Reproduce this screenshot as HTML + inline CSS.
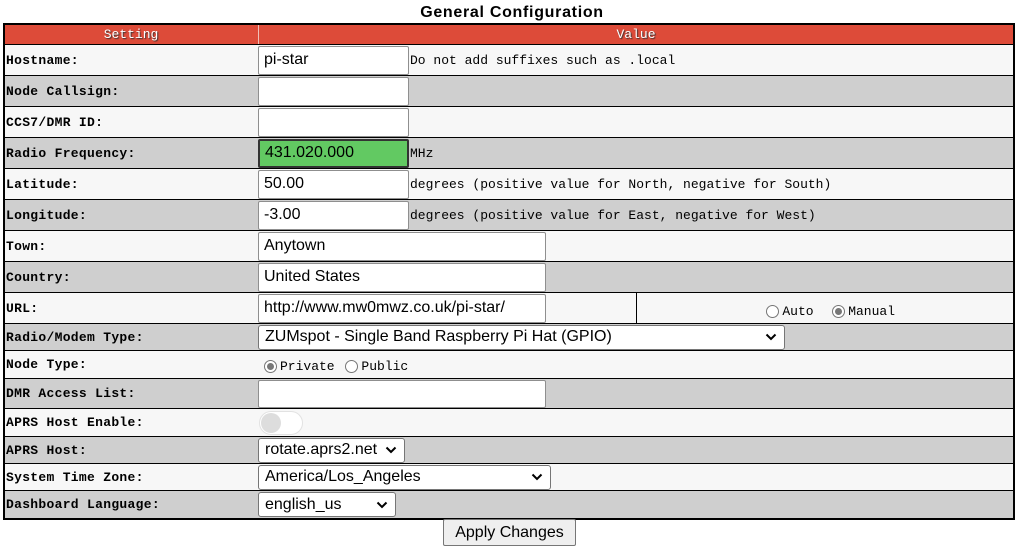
<!DOCTYPE html><html><head><style>
body{margin:0;width:1024px;height:553px;background:#fff;position:relative;font-family:"Liberation Mono",monospace;overflow:hidden}
.t{position:absolute;left:0;top:4px;width:1024px;text-align:center;font:bold 16px "Liberation Sans",sans-serif;letter-spacing:0.7px;color:#000}
.tb{position:absolute;left:3px;top:23px;width:1008px;height:493px;border:2px solid #000;background:#000}
.r{position:absolute;left:0;width:1008px}
.l{position:absolute;left:0;width:252px;top:0;bottom:0;font-weight:bold;font-size:13px;padding-left:1px;display:flex;align-items:center;letter-spacing:0.3px}
.v{position:absolute;left:254px;right:0;top:0;bottom:0;font-size:13px;display:flex;align-items:center}
.a{background:#f7f7f7}.b{background:#cfcfcf}
.in{box-sizing:border-box;height:29px;border:1px solid #8f8f8f;border-radius:2px;background:#fff;font:16px "Liberation Sans",sans-serif;padding-left:5px;display:flex;align-items:center;margin-left:-1px;margin-right:1px}
.sel{box-sizing:border-box;height:25px;border:1px solid #767676;border-radius:3px;background:#fff;font:16px "Liberation Sans",sans-serif;padding-left:6px;display:flex;align-items:center;justify-content:space-between;padding-right:7px;margin-left:-1px}
.rad{display:inline-block;width:13px;height:13px;border:1px solid #767676;border-radius:50%;box-sizing:border-box;vertical-align:-2px;margin:0 3px 0 3px;position:relative;background:#fff}
.rad.on::after{content:"";position:absolute;left:2px;top:2px;width:7px;height:7px;border-radius:50%;background:#777}
</style></head><body>
<div class="t">General Configuration</div>
<div class="tb">
<div class="r" style="top:0;height:19px;background:#dd4b39;color:#fff;font-size:13px;text-shadow:1px 1px 1px #333">
<div style="position:absolute;left:0;width:252px;text-align:center;top:2px">Setting</div>
<div style="position:absolute;left:253px;width:1px;top:0;bottom:0;background:#f0c0b8"></div>
<div style="position:absolute;left:254px;right:0;text-align:center;top:2px">Value</div></div>

<div class="r a" style="top:20px;height:30px"><div class="l">Hostname:</div><div class="v a"><div class="in" style="width:151px">pi-star</div>Do not add suffixes such as .local</div></div>
<div class="r b" style="top:51px;height:30px"><div class="l">Node Callsign:</div><div class="v b"><div class="in" style="width:151px"></div></div></div>
<div class="r a" style="top:82px;height:30px"><div class="l">CCS7/DMR ID:</div><div class="v a"><div class="in" style="width:151px"></div></div></div>
<div class="r b" style="top:113px;height:30px"><div class="l">Radio Frequency:</div><div class="v b"><div class="in" style="width:151px;background:#62c962;border:2px solid #333">431.020.000</div>MHz</div></div>
<div class="r a" style="top:144px;height:30px"><div class="l">Latitude:</div><div class="v a"><div class="in" style="width:151px">50.00</div>degrees (positive value for North, negative for South)</div></div>
<div class="r b" style="top:175px;height:30px"><div class="l">Longitude:</div><div class="v b"><div class="in" style="width:151px">-3.00</div>degrees (positive value for East, negative for West)</div></div>
<div class="r a" style="top:206px;height:30px"><div class="l">Town:</div><div class="v a"><div class="in" style="width:288px">Anytown</div></div></div>
<div class="r b" style="top:237px;height:30px"><div class="l">Country:</div><div class="v b"><div class="in" style="width:288px">United States</div></div></div>
<div class="r a" style="top:268px;height:30px"><div class="l">URL:</div><div class="v a"><div class="in" style="width:288px">http://www.mw0mwz.co.uk/pi-star/</div></div>
<div style="position:absolute;left:631px;top:0;bottom:0;width:1px;background:#000"></div>
<div style="position:absolute;left:632px;right:0;top:0;bottom:0;background:#f7f7f7;display:flex;align-items:center;justify-content:flex-end;padding-right:118px;font-size:13px;padding-top:6px;box-sizing:border-box"><span class="rad"></span>Auto&nbsp;&nbsp;<span class="rad on"></span>Manual</div></div>
<div class="r b" style="top:299px;height:26px"><div class="l">Radio/Modem Type:</div><div class="v b"><div class="sel" style="width:527px">ZUMspot - Single Band Raspberry Pi Hat (GPIO)<svg width="12" height="8" viewBox="0 0 12 8"><path d="M1.5 1.5 6 6 10.5 1.5" fill="none" stroke="#000" stroke-width="2"/></svg></div></div></div>
<div class="r a" style="top:326px;height:27px"><div class="l">Node Type:</div><div class="v a" style="padding-top:4px;box-sizing:border-box"><span class="rad on" style="margin-left:5px"></span>Private&nbsp;<span class="rad"></span>Public</div></div>
<div class="r b" style="top:354px;height:29px"><div class="l">DMR Access List:</div><div class="v b"><div class="in" style="width:288px;height:28px"></div></div></div>
<div class="r a" style="top:384px;height:27px"><div class="l">APRS Host Enable:</div><div class="v a"><div style="margin-left:0px;width:42px;height:22px;border:1px solid #e2e2e2;border-radius:12px;background:#fff;position:relative"><div style="position:absolute;left:1px;top:1px;width:20px;height:20px;border-radius:50%;background:#ddd"></div></div></div></div>
<div class="r b" style="top:412px;height:26px"><div class="l">APRS Host:</div><div class="v b"><div class="sel" style="width:147px">rotate.aprs2.net<svg width="12" height="8" viewBox="0 0 12 8"><path d="M1.5 1.5 6 6 10.5 1.5" fill="none" stroke="#000" stroke-width="2"/></svg></div></div></div>
<div class="r a" style="top:439px;height:26px"><div class="l">System Time Zone:</div><div class="v a"><div class="sel" style="width:293px">America/Los_Angeles<svg width="12" height="8" viewBox="0 0 12 8"><path d="M1.5 1.5 6 6 10.5 1.5" fill="none" stroke="#000" stroke-width="2"/></svg></div></div></div>
<div class="r b" style="top:466px;height:27px"><div class="l">Dashboard Language:</div><div class="v b"><div class="sel" style="width:138px">english_us<svg width="12" height="8" viewBox="0 0 12 8"><path d="M1.5 1.5 6 6 10.5 1.5" fill="none" stroke="#000" stroke-width="2"/></svg></div></div></div>
</div>
<div style="position:absolute;left:443px;top:519px;width:133px;height:27px;box-sizing:border-box;border:1px solid #767676;border-radius:2px;background:#efefef;font:16px 'Liberation Sans',sans-serif;display:flex;align-items:center;justify-content:center">Apply Changes</div>
</body></html>
